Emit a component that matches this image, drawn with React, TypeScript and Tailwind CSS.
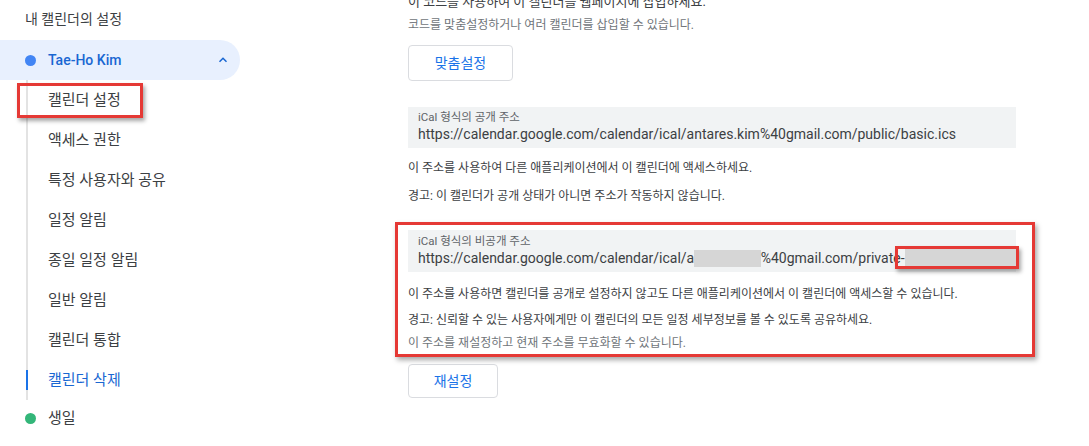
import React from "react";

const FONT = { fontFamily: 'Roboto, "Noto Sans CJK KR", "Noto Sans", sans-serif' };

const items = [
  "캘린더 설정",
  "액세스 권한",
  "특정 사용자와 공유",
  "일정 알림",
  "종일 일정 알림",
  "일반 알림",
  "캘린더 통합",
];

export default function App() {
  return (
    <div style={FONT} className="w-[1089px] h-[446px] overflow-hidden bg-white flex text-[#3c4043]">
      {/* Sidebar */}
      <div className="relative w-[256px] shrink-0">
        <div className="h-[38px] flex items-center pl-[25px] text-[14px] text-[#3c4043]">내 캘린더의 설정</div>
        <div className="mt-[2px] h-[40px] w-[240px] bg-[#e8f0fe] rounded-r-full flex items-center pl-[25px] pr-[10px]">
          <span className="w-[11px] h-[11px] rounded-full bg-[#4285f4]" />
          <span className="ml-[12px] text-[14px] font-medium text-[#1967d2]">Tae-Ho Kim</span>
          <svg className="ml-auto" width="14" height="14" viewBox="0 0 24 24">
            <path d="M6 15l6-6 6 6" fill="none" stroke="#1967d2" strokeWidth="2.6" />
          </svg>
        </div>
        <div className="ml-[26px] w-[214px] border-l-2 border-[#e3e3e3]">
          {items.map((t) => (
            <div key={t} className="h-[40px] flex items-center pl-[20px] text-[15px] text-[#3c4043]">
              {t}
            </div>
          ))}
          <div className="relative h-[40px] flex items-center pl-[20px] text-[15px] text-[#1967d2]">
            <span className="absolute left-[-2px] top-[10px] w-[2px] h-[20px] bg-[#1a73e8]" />
            캘린더 삭제
          </div>
        </div>
        <div className="h-[36px] flex items-center pl-[25px]">
          <span className="w-[11px] h-[11px] rounded-full bg-[#33b679]" />
          <span className="ml-[12px] text-[15px] text-[#3c4043]">생일</span>
        </div>
        <div className="absolute left-[17px] top-[83px] w-[126px] h-[35px] border-[3px] border-[#e53935] shadow-[2px_3px_4px_rgba(0,0,0,0.35)]" />
      </div>

      {/* Main */}
      <div className="ml-[139px] w-[640px] flex flex-col">
        <div className="px-[13px]">
          <div className="mt-[-8px] h-[20px] leading-[20px] text-[13px] text-[#3c4043]">
            이 코드를 사용하여 이 캘린더를 웹페이지에 삽입하세요.
          </div>
          <div className="mt-[4px] h-[18px] leading-[18px] text-[12px] text-[#70757a]">
            코드를 맞춤설정하거나 여러 캘린더를 삽입할 수 있습니다.
          </div>
          <button className="mt-[11px] w-[105px] h-[36px] border border-[#dadce0] rounded-[4px] text-[14px] text-[#1a73e8] bg-white">
            맞춤설정
          </button>
          <div className="mt-[26px] w-[608px] h-[41px] bg-[#f1f3f4] pl-[10px] pt-[3px]">
            <div className="h-[14px] leading-[14px] text-[11.5px] text-[#5f6368]">iCal 형식의 공개 주소</div>
            <div className="h-[20px] leading-[20px] text-[14px] text-[#3c4043] whitespace-nowrap">
              https://calendar.google.com/calendar/ical/antares.kim%40gmail.com/public/basic.ics
            </div>
          </div>
          <div className="mt-[10px] h-[20px] leading-[20px] text-[12px] text-[#3c4043]">
            이 주소를 사용하여 다른 애플리케이션에서 이 캘린더에 액세스하세요.
          </div>
          <div className="mt-[8px] h-[20px] leading-[20px] text-[12px] text-[#3c4043]">
            경고: 이 캘린더가 공개 상태가 아니면 주소가 작동하지 않습니다.
          </div>
        </div>

        <div className="relative mt-[16px] w-[640px] h-[135px] border-[3px] border-[#e53935] shadow-[2px_3px_5px_rgba(0,0,0,0.35)] px-[10px]">
          <div className="mt-[5px] w-[608px] h-[42px] bg-[#f1f3f4] pl-[10px] pt-[4px]">
            <div className="h-[14px] leading-[14px] text-[11.5px] text-[#5f6368]">iCal 형식의 비공개 주소</div>
            <div className="h-[20px] leading-[20px] text-[14px] text-[#3c4043] whitespace-nowrap flex items-center">
              <span>https://calendar.google.com/calendar/ical/a</span>
              <span className="inline-block w-[68px] h-[17px] bg-[#d6d6d6]" />
              <span>%40gmail.com/private-</span>
              <span className="inline-block w-[114px] h-[18px] bg-[#d6d6d6]" />
            </div>
          </div>
          <div className="mt-[12px] h-[20px] leading-[20px] text-[12px] text-[#3c4043]">
            이 주소를 사용하면 캘린더를 공개로 설정하지 않고도 다른 애플리케이션에서 이 캘린더에 액세스할 수 있습니다.
          </div>
          <div className="mt-[6px] h-[20px] leading-[20px] text-[12px] text-[#3c4043]">
            경고: 신뢰할 수 있는 사용자에게만 이 캘린더의 모든 일정 세부정보를 볼 수 있도록 공유하세요.
          </div>
          <div className="mt-[3px] h-[20px] leading-[20px] text-[12px] text-[#70757a]">
            이 주소를 재설정하고 현재 주소를 무효화할 수 있습니다.
          </div>
          <div className="absolute left-[497px] top-[21px] w-[124px] h-[23px] border-[3px] border-[#e53935] shadow-[2px_3px_4px_rgba(0,0,0,0.35)]" />
        </div>

        <div className="px-[13px]">
          <button className="mt-[7px] w-[90px] h-[34px] border border-[#dadce0] rounded-[4px] text-[14px] text-[#1a73e8] bg-white">
            재설정
          </button>
        </div>
      </div>
    </div>
  );
}
